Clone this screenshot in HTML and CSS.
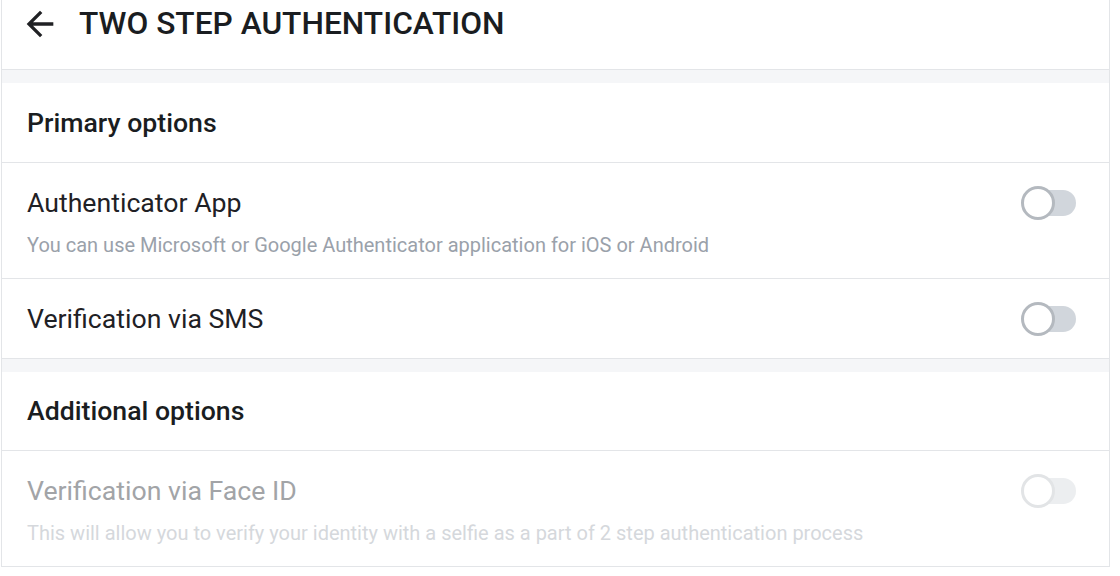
FILE: index.html
```html
<!DOCTYPE html>
<html>

<head>
    <meta charset="UTF-8">
    <title>Two step authentication</title>
    <link rel="stylesheet" href="styles.css">
</head>

<body>
    <div class="settings">
        <div class="topbar">
            <svg class="back" viewBox="0 0 24 24" width="40" height="40">
                <path d="M20 11H7.83l5.59-5.59L12 4l-8 8 8 8 1.41-1.41L7.83 13H20v-2z" fill="#202124"></path>
            </svg>
            <h1 class="topbar-title">TWO STEP AUTHENTICATION</h1>
        </div>

        <div class="spacer"></div>

        <div class="section-title">Primary options</div>

        <div class="option has-desc">
            <div class="option-text">
                <div class="option-name">Authenticator App</div>
                <div class="option-desc">You can use Microsoft or Google Authenticator application for iOS or Android</div>
            </div>
            <div class="switch">
                <span class="switch-track"></span>
                <span class="switch-knob"></span>
            </div>
        </div>

        <div class="option">
            <div class="option-text">
                <div class="option-name">Verification via SMS</div>
            </div>
            <div class="switch">
                <span class="switch-track"></span>
                <span class="switch-knob"></span>
            </div>
        </div>

        <div class="spacer"></div>

        <div class="section-title short">Additional options</div>

        <div class="option has-desc disabled">
            <div class="option-text">
                <div class="option-name">Verification via Face ID</div>
                <div class="option-desc">This will allow you to verify your identity with a selfie as a part of 2 step authentication process</div>
            </div>
            <div class="switch">
                <span class="switch-track"></span>
                <span class="switch-knob"></span>
            </div>
        </div>
    </div>
</body>

</html>
```

FILE: styles.css
```css
body {
    margin: 0;
    background-color: #fff;
    font-family: Roboto, "Liberation Sans", Arial, sans-serif;
    color: #202124;
}

.settings {
    width: 1109px;
    margin-left: 1px;
    box-sizing: border-box;
    border-left: 1px solid #e3e5e8;
    border-right: 1px solid #e3e5e8;
}

.topbar {
    display: flex;
    align-items: center;
    height: 70px;
    padding: 0 0 22px 18px;
    box-sizing: border-box;
    border-bottom: 1px solid #e3e5e8;
}

.back {
    display: block;
    margin-right: 19px;
}

.topbar-title {
    margin: 0;
    font-size: 31.7px;
    font-weight: 500;
    line-height: 40px;
    color: #1a1d21;
}

.spacer {
    height: 13px;
    background-color: #f5f6f8;
}

.section-title {
    display: flex;
    align-items: center;
    height: 79px;
    padding-left: 25px;
    border-bottom: 1px solid #e3e5e8;
    font-size: 26.67px;
    font-weight: 500;
    color: #1a1d21;
}

.section-title.short {
    height: 78px;
}

.option {
    display: flex;
    justify-content: space-between;
    align-items: flex-start;
    padding: 24px 33px 23px 25px;
    border-bottom: 1px solid #e3e5e8;
}

.option.has-desc {
    padding-bottom: 19px;
}

.option-name {
    font-size: 26.67px;
    line-height: 32px;
    color: #1f2125;
}

.option-desc {
    margin-top: 12px;
    font-size: 20px;
    line-height: 28px;
    color: #9aa1aa;
}

.switch {
    position: relative;
    width: 55px;
    height: 32px;
}

.switch-track {
    position: absolute;
    top: 3px;
    right: 0;
    width: 54px;
    height: 26px;
    border-radius: 13px;
    background-color: #d1d6dc;
}

.switch-knob {
    position: absolute;
    top: -1px;
    left: 0;
    width: 28px;
    height: 28px;
    border: 3px solid #b4b9bf;
    border-radius: 50%;
    background-color: #fff;
}

.disabled .option-name {
    color: #a2a4a7;
}

.disabled .option-desc {
    color: #d5d8dc;
}

.disabled .switch-track {
    background-color: #eceef0;
}

.disabled .switch-knob {
    border-color: #e2e4e6;
}
```
